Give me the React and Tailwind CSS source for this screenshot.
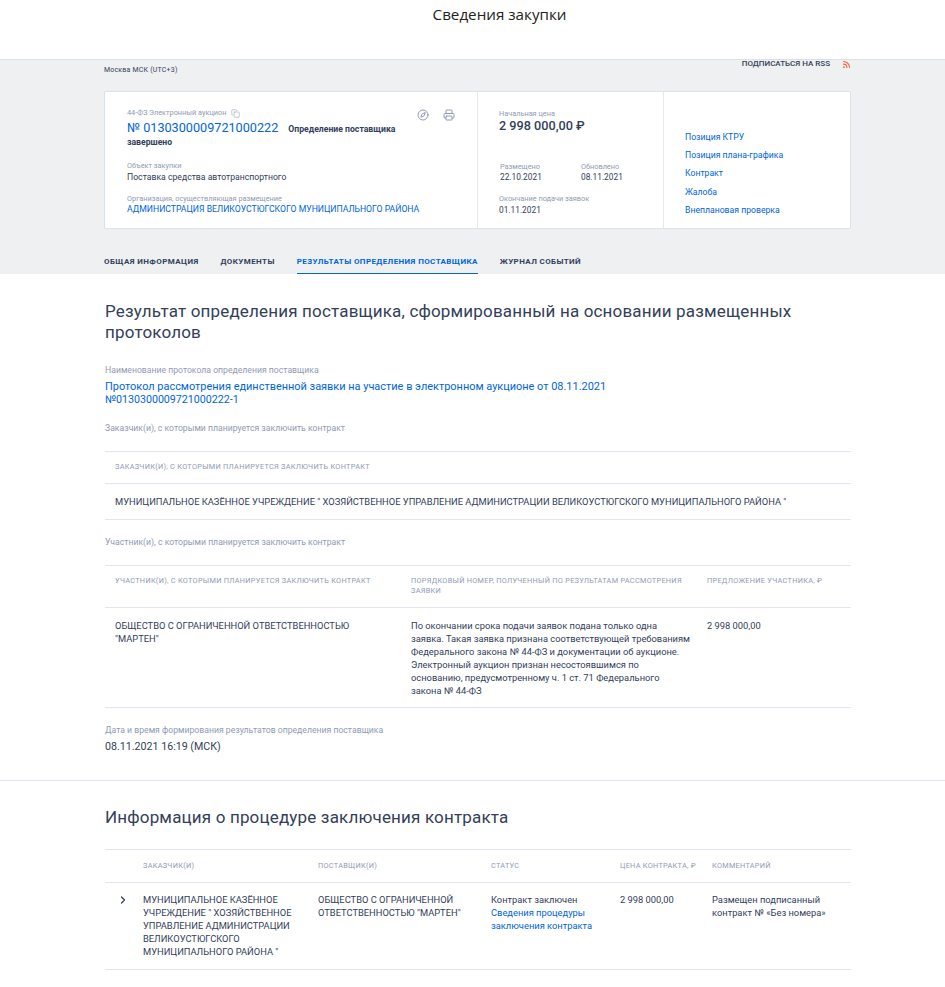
import React from 'react';
import { Printer, Compass, Copy, Rss, ChevronRight } from 'lucide-react';

const Label = ({ children, className = '' }) => (
  <div className={`text-[7.33px] leading-[10px] text-[#8f9bb3] ${className}`}>{children}</div>
);

const Caption = ({ children, className = '' }) => (
  <div className={`text-[8.67px] leading-[12px] text-[#8f9bb3] ${className}`}>{children}</div>
);

const Link = ({ children, className = '' }) => (
  <a className={`text-[#0065dd] ${className}`}>{children}</a>
);

const TABS = ['Общая информация', 'Документы', 'Результаты определения поставщика', 'Журнал событий'];
const SIDE_LINKS = ['Позиция КТРУ', 'Позиция плана-графика', 'Контракт', 'Жалоба', 'Внеплановая проверка'];

const Th = ({ children, className = '' }) => (
  <div className={`text-[7.33px] leading-[10px] uppercase tracking-[0.28px] text-[#8f9bb3] ${className}`}>{children}</div>
);

export default function App() {
  return (
    <div className="min-h-[987px] bg-white font-['Roboto',sans-serif] text-[#334059]">
      <header className="h-[60px] border-b border-[#dcdfe3] bg-white pl-[54px] pt-[4px] text-center font-['Open_Sans',sans-serif] text-[15.2px] leading-[20px] text-[#222]">
        Сведения закупки
      </header>

      <section className="h-[214px] bg-[#eef0f2] pl-[104px] pr-[94px]">
        <div className="flex h-[31px] justify-between">
          <div className="pt-[5px] text-[7px] leading-[10px] tracking-[0.2px] text-[#334059]">Москва МСК (UTC+3)</div>
          <div className="flex items-start gap-[12px]">
            <span className="text-[8px] font-medium uppercase leading-[8px] text-[#334059]">Подписаться на RSS</span>
            <Rss size={9} strokeWidth={3} className="text-[#ef6c4a]" />
          </div>
        </div>

        <div className="flex h-[138px] rounded-[2px] border border-[#dbe3ec] bg-white">
          <div className="relative w-[373px] border-r border-[#e4e9f0] pl-[22px] pt-[16px]">
            <div className="flex items-center gap-[5px] text-[7.33px] leading-[10px] text-[#8f9bb3]">
              44-ФЗ Электронный аукцион
              <Copy size={9} className="text-[#a9b3c4]" />
            </div>
            <div className="mt-[3px] w-[300px] text-[8.67px] font-bold leading-[13px] text-[#334059]">
              <span className="mr-[10px] text-[12.67px] font-normal leading-[14px] text-[#0065dd]">№ 0130300009721000222</span>
              Определение поставщика завершено
            </div>
            <Label className="mt-[12px]">Объект закупки</Label>
            <div className="text-[8.67px] leading-[13px]">Поставка средства автотранспортного</div>
            <Label className="mt-[10px]">Организация, осуществляющая размещение</Label>
            <Link className="-mt-px block text-[8.67px] leading-[13px]">АДМИНИСТРАЦИЯ ВЕЛИКОУСТЮГСКОГО МУНИЦИПАЛЬНОГО РАЙОНА</Link>
            <div className="absolute right-[22px] top-[17px] flex items-center gap-[14px] text-[#8f9bb3]">
              <Compass size={12} />
              <Printer size={12} />
            </div>
          </div>

          <div className="w-[186px] border-r border-[#e4e9f0] pl-[21px] pt-[17px]">
            <Label>Начальная цена</Label>
            <div className="-mt-px text-[12.67px] font-medium leading-[15px]">2 998 000,00 ₽</div>
            <div className="mt-[29px] flex">
              <div className="w-[82px] pl-px">
                <Label>Размещено</Label>
                <div className="-mt-px text-[8.33px] leading-[13px]">22.10.2021</div>
              </div>
              <div>
                <Label>Обновлено</Label>
                <div className="-mt-px text-[8.33px] leading-[13px]">08.11.2021</div>
              </div>
            </div>
            <Label className="mt-[10px]">Окончание подачи заявок</Label>
            <div className="text-[8.33px] leading-[13px]">01.11.2021</div>
          </div>

          <div className="flex flex-1 flex-col gap-[5.4px] pl-[21px] pt-[38.5px]">
            {SIDE_LINKS.map((l) => (
              <Link key={l} className="text-[8.67px] leading-[13px]">{l}</Link>
            ))}
          </div>
        </div>

        <nav className="mt-[22px] flex gap-[22px]">
          {TABS.map((t, i) => (
            <div
              key={t}
              className={`h-[23px] pt-[6px] text-[8px] font-bold uppercase leading-[10px] tracking-[0.4px] ${i === 2 ? 'border-b border-[#0065dd] text-[#0065dd]' : 'text-[#334059]'}`}
            >
              {t}
            </div>
          ))}
        </nav>
      </section>

      <section className="border-b border-[#e4e5ee] pb-[27px] pl-[105px] pr-[94px] pt-[27px]">
        <h2 className="text-[17px] leading-[21px] tracking-[0.17px]">
          Результат определения поставщика, сформированный на основании размещенных протоколов
        </h2>
        <Caption className="mt-[21px]">Наименование протокола определения поставщика</Caption>
        <Link className="mt-[4px] block w-[560px] text-[10.95px] leading-[13px]">
          Протокол рассмотрения единственной заявки на участие в электронном аукционе от 08.11.2021{' '}
          <span className="text-[10.67px]">№0130300009721000222-1</span>
        </Link>
        <Caption className="mt-[16px]">Заказчик(и), с которыми планируется заключить контракт</Caption>

        <div className="mt-[17px] border-t border-[#e4e5ee]">
          <div className="border-b border-[#e4e5ee] pb-[11px] pl-[10px] pt-[10px]">
            <Th>Заказчик(и), с которыми планируется заключить контракт</Th>
          </div>
          <div className="border-b border-[#e4e5ee] py-[11px] pl-[10px] text-[9.33px] leading-[13px]">
            МУНИЦИПАЛЬНОЕ КАЗЁННОЕ УЧРЕЖДЕНИЕ " ХОЗЯЙСТВЕННОЕ УПРАВЛЕНИЕ АДМИНИСТРАЦИИ ВЕЛИКОУСТЮГСКОГО МУНИЦИПАЛЬНОГО РАЙОНА "
          </div>
        </div>

        <Caption className="mt-[16px]">Участник(и), с которыми планируется заключить контракт</Caption>

        <div className="mt-[17px] border-t border-[#e4e5ee]">
          <div className="grid grid-cols-[296px_296px_1fr] border-b border-[#e4e5ee] pb-[11px] pl-[10px] pt-[10px]">
            <Th className="pr-2">Участник(и), с которыми планируется заключить контракт</Th>
            <Th className="pr-[16px]">Порядковый номер, полученный по результатам рассмотрения заявки</Th>
            <Th>Предложение участника, ₽</Th>
          </div>
          <div className="grid grid-cols-[296px_296px_1fr] border-b border-[#e4e5ee] pb-[10px] pl-[10px] pt-[11px] text-[9.33px] leading-[13px]">
            <div className="pr-10">ОБЩЕСТВО С ОГРАНИЧЕННОЙ ОТВЕТСТВЕННОСТЬЮ "МАРТЕН"</div>
            <div className="pr-[16.5px]">
              По окончании срока подачи заявок подана только одна заявка. Такая заявка признана соответствующей требованиям Федерального закона № 44-ФЗ и документации об аукционе. Электронный аукцион признан несостоявшимся по основанию, предусмотренному ч. 1 ст. 71 Федерального закона № 44-ФЗ
            </div>
            <div>2 998 000,00</div>
          </div>
        </div>

        <Caption className="mt-[16px]">Дата и время формирования результатов определения поставщика</Caption>
        <div className="mt-[4px] text-[10.67px] leading-[13px]">08.11.2021 16:19 (МСК)</div>
      </section>

      <section className="pl-[105px] pr-[94px] pt-[26px]">
        <h2 className="text-[17px] leading-[21px] tracking-[0.17px]">Информация о процедуре заключения контракта</h2>
        <div className="mt-[21px] border-t border-[#e4e5ee]">
          <div className="grid grid-cols-[38px_175px_173px_129px_92px_1fr] border-b border-[#e4e5ee] py-[11px]">
            <div />
            <Th>Заказчик(и)</Th>
            <Th>Поставщик(и)</Th>
            <Th>Статус</Th>
            <Th>Цена контракта, ₽</Th>
            <Th>Комментарий</Th>
          </div>
          <div className="grid grid-cols-[38px_175px_173px_129px_92px_1fr] border-b border-[#e4e5ee] pb-[11px] pt-[10px] text-[9.33px] leading-[13px]">
            <ChevronRight size={12} strokeWidth={2.5} className="ml-[12px] mt-[1px]" />
            <div className="pr-3">МУНИЦИПАЛЬНОЕ КАЗЁННОЕ УЧРЕЖДЕНИЕ " ХОЗЯЙСТВЕННОЕ УПРАВЛЕНИЕ АДМИНИСТРАЦИИ ВЕЛИКОУСТЮГСКОГО МУНИЦИПАЛЬНОГО РАЙОНА "</div>
            <div className="pr-3">ОБЩЕСТВО С ОГРАНИЧЕННОЙ ОТВЕТСТВЕННОСТЬЮ "МАРТЕН"</div>
            <div className="pr-3">
              Контракт заключен
              <Link className="block">Сведения процедуры заключения контракта</Link>
            </div>
            <div>2 998 000,00</div>
            <div>Размещен подписанный контракт № «Без номера»</div>
          </div>
        </div>
      </section>
    </div>
  );
}
